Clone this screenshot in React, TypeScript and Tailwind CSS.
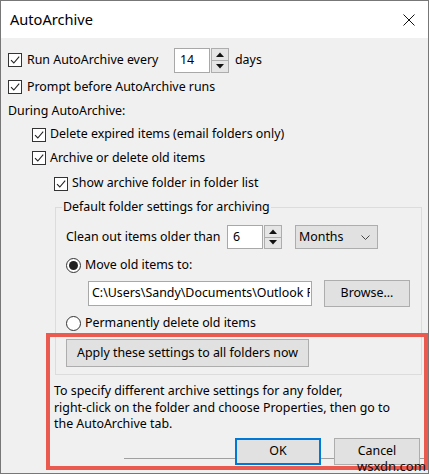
import React from 'react';

const font = "font-['Noto_Sans','Open_Sans',sans-serif]";

const Check = () => (
   <span className="w-[14px] h-[14px] shrink-0 border border-[#333] bg-white flex items-center justify-center">
      <svg width="12" height="12" viewBox="0 0 12 12">
         <path d="M2 6.2 L4.8 9 L10.2 2.6" fill="none" stroke="#222" strokeWidth="1.1" />
      </svg>
   </span>
);

const Radio = ({ on }: { on?: boolean }) => (
   <span className="w-[15px] h-[15px] shrink-0 rounded-full border border-[#333] bg-white flex items-center justify-center">
      {on && <span className="w-[9px] h-[9px] rounded-full bg-[#222]" />}
   </span>
);

const Spinner = () => (
   <div className="flex flex-col w-[18px] h-full ml-[1px]">
      <div className="flex-1 border border-[#adadad] bg-[#e5e5e5] flex items-center justify-center">
         <svg width="8" height="5" viewBox="0 0 8 5"><polygon points="0,5 4,0.5 8,5" fill="#111" /></svg>
      </div>
      <div className="flex-1 border border-t-0 border-[#adadad] bg-[#e5e5e5] flex items-center justify-center">
         <svg width="8" height="5" viewBox="0 0 8 5"><polygon points="0,0 4,4.5 8,0" fill="#111" /></svg>
      </div>
   </div>
);

const Line = ({ className }: { className: string }) => <div className={`h-px bg-[#a0a0a0] mt-[20px] ${className}`} />;

export default function App() {
   return (
      <div className={`w-[430px] h-[476px] bg-white ${font} text-[12.4px] text-black`}>
         <div className="relative w-[429px] h-[474px] border border-[#777] bg-[#f0f0f0] flex flex-col overflow-hidden">
            {/* Title bar */}
            <div className="h-[37px] bg-white flex items-center justify-between pl-[9px] pr-[13px] shrink-0">
               <span className="text-[14.6px] leading-none">AutoArchive</span>
               <svg width="12" height="12" viewBox="0 0 12 12">
                  <path d="M0.5 0.5 L11.5 11.5 M11.5 0.5 L0.5 11.5" stroke="#111" strokeWidth="1" />
               </svg>
            </div>

            {/* Body */}
            <div className="flex flex-col pl-[7px]">
               <div className="mt-[9px] h-[26px] flex items-center">
                  <Check />
                  <span className="w-[152px] pl-[5px]">Run AutoArchive every</span>
                  <div className="flex h-[25px] items-stretch">
                     <div className="w-[36px] border border-[#a8a8a8] bg-white pl-[5px] flex items-center">14</div>
                     <Spinner />
                  </div>
                  <span className="ml-[6px]">days</span>
               </div>
               <div className="mt-[2px] h-[24px] flex items-center gap-[5px]">
                  <Check />
                  <span>Prompt before AutoArchive runs</span>
               </div>
               <div className="h-[24px] flex items-center">During AutoArchive:</div>
               <div className="h-[23px] flex items-center gap-[4px] ml-[24px]">
                  <Check />
                  <span>Delete expired items (email folders only)</span>
               </div>
               <div className="h-[24px] flex items-center gap-[4px] ml-[24px]">
                  <Check />
                  <span>Archive or delete old items</span>
               </div>
               <div className="h-[27px] flex items-center gap-[4px] ml-[46px]">
                  <Check />
                  <span>Show archive folder in folder list</span>
               </div>

               <fieldset className="mt-[2px] ml-[47px] mr-[6px] border border-[#dcdcdc] px-0 pb-[7px]">
                  <legend className="ml-[6px] px-[1px] leading-[16px]">Default folder settings for archiving</legend>
                  <div className="pl-[10px] flex flex-col">
                     <div className="mt-[10px] h-[24px] flex items-center">
                        <span className="w-[161px]">Clean out items older than</span>
                        <div className="flex h-[24px] items-stretch">
                           <div className="w-[36px] border border-[#a8a8a8] bg-white pl-[5px] flex items-center">6</div>
                           <Spinner />
                        </div>
                        <div className="ml-[13px] w-[83px] h-[24px] border border-[#adadad] bg-[#e1e1e1] flex items-center justify-between pl-[3px] pr-[7px]">
                           <span>Months</span>
                           <svg width="9" height="5" viewBox="0 0 9 5"><polyline points="0.5,0.5 4.5,4.5 8.5,0.5" fill="none" stroke="#444" strokeWidth="1" /></svg>
                        </div>
                     </div>
                     <div className="mt-[6px] h-[20px] flex items-center gap-[4px]">
                        <Radio on />
                        <span>Move old items to:</span>
                     </div>
                     <div className="mt-[5px] h-[27px] flex items-center ml-[22px]">
                        <div className="w-[224px] h-[25px] border border-[#a8a8a8] bg-white pl-[3px] flex items-center overflow-hidden whitespace-nowrap">
                           <span className="block w-[218px] overflow-hidden">C:\Users\Sandy\Documents\Outlook Files</span>
                        </div>
                        <button className="ml-[12px] w-[86px] h-[27px] border border-[#adadad] bg-[#e1e1e1] flex items-center justify-center">Browse...</button>
                     </div>
                     <div className="mt-[6px] h-[20px] flex items-center gap-[4px]">
                        <Radio />
                        <span>Permanently delete old items</span>
                     </div>
                     <button className="mt-[6px] w-[243px] h-[28px] border border-[#adadad] bg-[#e1e1e1] flex items-center justify-center">
                        Apply these settings to all folders now
                     </button>
                  </div>
               </fieldset>

               <p className="mt-[8px] ml-[46px] leading-[16.5px]">
                  To specify different archive settings for any folder,<br />
                  right-click on the folder and choose Properties, then go to<br />
                  the AutoArchive tab.
               </p>

               <div className="mt-[5px] h-[27px] flex items-start">
                  <Line className="flex-1 ml-[116px]" />
                  <button className="w-[86px] h-[27px] border-2 border-[#0078d7] bg-[#e1e1e1] flex items-center justify-center">OK</button>
                  <Line className="w-[13px]" />
                  <button className="w-[86px] h-[27px] border border-[#adadad] bg-[#e1e1e1] flex items-center justify-center">Cancel</button>
                  <Line className="w-[8px]" />
               </div>
            </div>

            {/* Annotation highlight */}
            <div className="absolute left-[45px] top-[332px] w-[382px] h-[137px] border-[4px] border-[#ea5a4f] pointer-events-none" />
            <span className="absolute left-[356px] top-[456px] text-[13px] text-[#111] pointer-events-none">wsxdn.com</span>
         </div>
      </div>
   );
}
